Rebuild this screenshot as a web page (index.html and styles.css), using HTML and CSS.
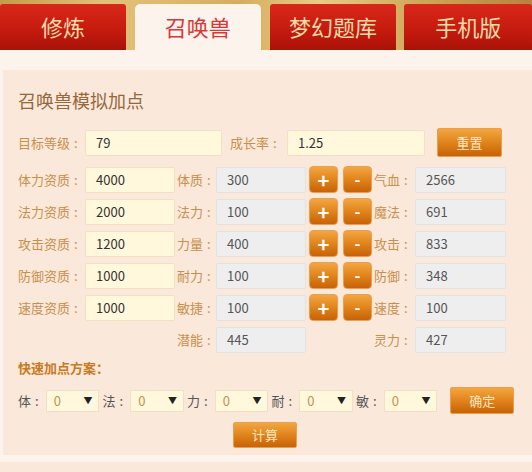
FILE: index.html
```html
<!DOCTYPE html>
<html lang="zh-CN">
<head>
    <meta charset="UTF-8">
    <meta name="viewport" content="width=device-width, initial-scale=1.0">
    <title>召唤兽模拟加点</title>
    <link rel="stylesheet" href="styles.css">
</head>
<body>
    <header class="banner">
        <nav class="tabs">
            <a class="tab">修炼</a>
            <a class="tab active">召唤兽</a>
            <a class="tab">梦幻题库</a>
            <a class="tab">手机版</a>
        </nav>
    </header>
    <div class="strip"></div>
    <section class="panel">
        <h3 class="title">召唤兽模拟加点</h3>

        <div class="row top-row">
            <label class="lb1">目标等级<b>:</b></label>
            <div class="ipt cream w-lvl">79</div>
            <label class="lb-grow">成长率<b>:</b></label>
            <div class="ipt cream w-grow">1.25</div>
            <button class="btn btn-reset">重置</button>
        </div>

        <div class="row">
            <label class="lb1">体力资质<b>:</b></label>
            <div class="ipt cream w-apt">4000</div>
            <label class="lb2">体质<b>:</b></label>
            <div class="ipt gray w-pt">300</div>
            <button class="btn pm plus">+</button>
            <button class="btn pm minus">-</button>
            <label class="lb3">气血<b>:</b></label>
            <div class="ipt gray w-res">2566</div>
        </div>
        <div class="row">
            <label class="lb1">法力资质<b>:</b></label>
            <div class="ipt cream w-apt">2000</div>
            <label class="lb2">法力<b>:</b></label>
            <div class="ipt gray w-pt">100</div>
            <button class="btn pm plus">+</button>
            <button class="btn pm minus">-</button>
            <label class="lb3">魔法<b>:</b></label>
            <div class="ipt gray w-res">691</div>
        </div>
        <div class="row">
            <label class="lb1">攻击资质<b>:</b></label>
            <div class="ipt cream w-apt">1200</div>
            <label class="lb2">力量<b>:</b></label>
            <div class="ipt gray w-pt">400</div>
            <button class="btn pm plus">+</button>
            <button class="btn pm minus">-</button>
            <label class="lb3">攻击<b>:</b></label>
            <div class="ipt gray w-res">833</div>
        </div>
        <div class="row">
            <label class="lb1">防御资质<b>:</b></label>
            <div class="ipt cream w-apt">1000</div>
            <label class="lb2">耐力<b>:</b></label>
            <div class="ipt gray w-pt">100</div>
            <button class="btn pm plus">+</button>
            <button class="btn pm minus">-</button>
            <label class="lb3">防御<b>:</b></label>
            <div class="ipt gray w-res">348</div>
        </div>
        <div class="row">
            <label class="lb1">速度资质<b>:</b></label>
            <div class="ipt cream w-apt">1000</div>
            <label class="lb2">敏捷<b>:</b></label>
            <div class="ipt gray w-pt">100</div>
            <button class="btn pm plus">+</button>
            <button class="btn pm minus">-</button>
            <label class="lb3">速度<b>:</b></label>
            <div class="ipt gray w-res">100</div>
        </div>
        <div class="row">
            <span class="lb1"></span>
            <span class="w-apt"></span>
            <label class="lb2">潜能<b>:</b></label>
            <div class="ipt gray w-pt">445</div>
            <span class="pm"></span>
            <span class="pm"></span>
            <label class="lb3">灵力<b>:</b></label>
            <div class="ipt gray w-res">427</div>
        </div>

        <h4 class="quick">快速加点方案：</h4>
        <div class="sel-row">
            <label>体<b>:</b></label>
            <div class="sel"><span>0</span><i>▼</i></div>
            <label>法<b>:</b></label>
            <div class="sel"><span>0</span><i>▼</i></div>
            <label>力<b>:</b></label>
            <div class="sel"><span>0</span><i>▼</i></div>
            <label>耐<b>:</b></label>
            <div class="sel"><span>0</span><i>▼</i></div>
            <label>敏<b>:</b></label>
            <div class="sel"><span>0</span><i>▼</i></div>
            <button class="btn btn-ok">确定</button>
        </div>
        <div class="calc-row">
            <button class="btn btn-calc">计算</button>
        </div>
    </section>
    <div class="strip bottom"></div>
    <div class="panel-end"></div>
</body>
</html>
```

FILE: styles.css
```css
body {
    margin: 0;
    font-family: "Noto Sans CJK SC", "Noto Sans", sans-serif;
    background-color: #fae8da;
    overflow: hidden;
}
.banner {
    height: 50px;
    background: linear-gradient(90deg, #c79b4a 0%, #e3c27a 20%, #d6ad5e 45%, #e9cc86 60%, #cfa557 80%, #b8823e 100%);
}
.tabs {
    display: flex;
    padding-top: 4px;
}
.tab {
    display: block;
    width: 128px;
    height: 46px;
    margin-right: 9px;
    line-height: 44px;
    text-align: center;
    font-size: 22px;
    color: #fbdcaa;
    background: linear-gradient(180deg, #d8281a 0%, #c41a0e 60%, #a81208 100%);
    border-radius: 3px 3px 0 0;
    box-sizing: border-box;
}
.tab:nth-child(3) {
    width: 129px;
    margin-right: 8px;
}
.tab:last-child {
    width: 130px;
    margin-right: 0;
}
.tab.active {
    background: #fcf3ec;
    color: #d8383a;
    border-radius: 5px 5px 0 0;
}
.strip {
    height: 20px;
    background-color: #fcf3ec;
}
.panel {
    background-color: #fae8da;
    padding: 18px 18px 7px 18px;
    border-left: 3px solid #fcf3ec;
    margin: 0;
}
.title {
    margin: 0 0 15px -3px;
    font-size: 18px;
    font-weight: normal;
    color: #96673a;
    line-height: 25px;
    height: 25px;
}
.row {
    display: flex;
    align-items: center;
    height: 27px;
    margin-bottom: 5px;
    margin-left: -3px;
}
.top-row {
    height: 29px;
    margin-bottom: 9px;
}
label {
    font-size: 13px;
    line-height: 18px;
    color: #c8904e;
    white-space: nowrap;
}
label b {
    font-weight: normal;
    padding-left: 4px;
}
.lb1 { width: 67px; }
.lb2 { width: 39px; margin-left: 2px; }
.lb3 { width: 41px; margin-left: 2px; }
.lb-grow { width: 57px; margin-left: 8px; }
.ipt {
    height: 26px;
    line-height: 24px;
    box-sizing: border-box;
    padding-left: 10px;
    font-size: 13px;
    color: #333;
    border-radius: 2px;
}
.cream {
    background-color: #fff8dc;
    border: 1px solid #f2e0c2;
}
.gray {
    background-color: #eeeeee;
    border: 1px solid #e2e2e2;
    color: #555;
}
.w-lvl { width: 137px; }
.w-grow { width: 138px; }
.w-apt { width: 90px; }
.w-pt { width: 90px; }
.w-res { width: 91px; }
.btn {
    border: 1px solid #e8a050;
    background: linear-gradient(180deg, #f3a640 0%, #e0841c 50%, #c86206 100%);
    color: #fce6c0;
    font-family: inherit;
    font-size: 13px;
    line-height: 18px;
    border-radius: 2px;
    padding: 0;
    cursor: pointer;
}
.btn-reset {
    width: 65px;
    height: 29px;
    margin-left: 12px;
}
.pm {
    width: 29px;
    height: 27px;
    margin-left: 3px;
    border-radius: 4px;
    font-size: 20px;
    font-weight: bold;
    color: #fff;
    line-height: 25px;
}
.pm + .pm {
    margin-left: 5px;
}
span.pm {
    display: block;
}
.minus {
    font-size: 16px;
}
.quick {
    margin: 6px 0 10px -3px;
    font-size: 13px;
    color: #c77a22;
    line-height: 18px;
    height: 18px;
}
.sel-row {
    display: flex;
    align-items: center;
    height: 27px;
    margin-left: -3px;
}
.sel-row label {
    width: 28px;
    color: #555;
}
.sel {
    width: 54px;
    height: 22px;
    box-sizing: border-box;
    background-color: #fff8dc;
    border: 1px solid #f2e0c2;
    display: flex;
    justify-content: space-between;
    align-items: center;
    padding: 0 6px 0 7px;
    font-size: 13px;
    color: #c8904e;
    margin-right: 3px;
}
.sel i {
    font-style: normal;
    font-size: 9px;
    color: #222;
}
.btn-ok {
    width: 64px;
    height: 27px;
    margin-left: 10px;
}
.calc-row {
    display: flex;
    justify-content: center;
    height: 26px;
    margin-top: 8px;
    margin-left: -3px;
}
.btn-calc {
    width: 64px;
    height: 26px;
    margin-left: -2px;
}
.strip.bottom {
    height: 7px;
}
.panel-end {
    height: 40px;
    background-color: #fae8da;
}
```
